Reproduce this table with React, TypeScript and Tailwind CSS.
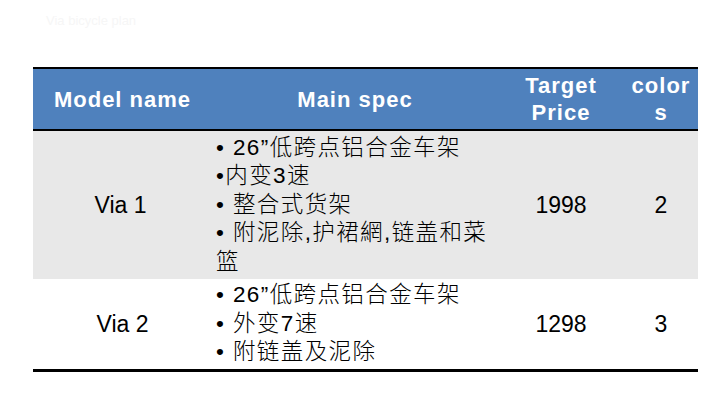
const latin = "font-['Liberation_Sans','Noto_Sans_CJK_SC',sans-serif]";

const cols = "grid grid-cols-[179px_286px_126px_74px]";

function SpecList({ lines }: { lines: string[] }) {
  return (
    <div className="flex flex-col pl-[4px] text-[22.5px] leading-[28.5px] tracking-[1.4px] font-light text-black">
      {lines.map((l, i) => (
        <div key={i} className="whitespace-pre">
          {l}
        </div>
      ))}
    </div>
  );
}

export default function App() {
  return (
    <div className={`w-[720px] h-[405px] bg-white relative overflow-hidden ${latin}`}>
      <div className="pt-[11px] pl-[46px] h-[67px] text-[13px] text-[#f6f6f6]">
        Via bicycle plan
      </div>

      <div className="ml-[33px] w-[665px]">
        {/* header */}
        <div className={`${cols} border-t-2 border-b-2 border-black bg-[#4f81bd] h-[64px] text-white font-bold text-[22px] leading-[27px] tracking-[1px]`}>
          <div className="flex items-center justify-center">Model name</div>
          <div className="flex items-center justify-center">Main spec</div>
          <div className="flex flex-col items-center justify-center text-center">
            <span>Target</span>
            <span>Price</span>
          </div>
          <div className="flex flex-col items-center justify-center text-center">
            <span>color</span>
            <span>s</span>
          </div>
        </div>

        {/* row 1 */}
        <div className={`${cols} bg-[#e8e8e8] h-[148px] text-[23px] text-black`}>
          <div className="flex items-center justify-center pr-[4px]">Via 1</div>
          <div className="flex items-center">
            <SpecList
              lines={[
                "• 26”低跨点铝合金车架",
                "•内变3速",
                "• 整合式货架",
                "• 附泥除,护裙網,链盖和菜",
                "篮",
              ]}
            />
          </div>
          <div className="flex items-center justify-center">1998</div>
          <div className="flex items-center justify-center">2</div>
        </div>

        {/* row 2 */}
        <div className={`${cols} bg-white h-[93px] border-b-[3px] border-black text-[23px] text-black`}>
          <div className="flex items-center justify-center">Via 2</div>
          <div className="flex items-center">
            <SpecList
              lines={["• 26”低跨点铝合金车架", "• 外变7速", "• 附链盖及泥除"]}
            />
          </div>
          <div className="flex items-center justify-center">1298</div>
          <div className="flex items-center justify-center">3</div>
        </div>
      </div>
    </div>
  );
}
